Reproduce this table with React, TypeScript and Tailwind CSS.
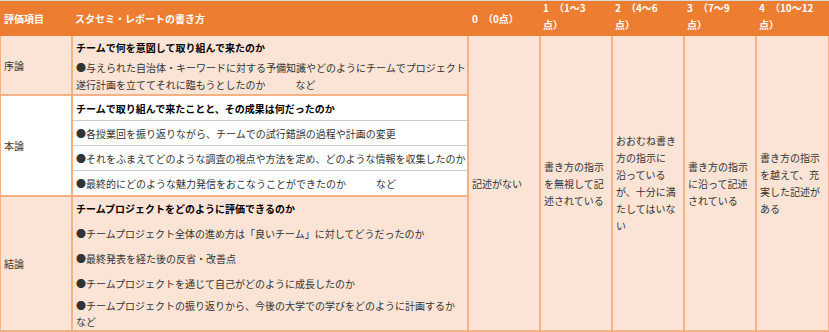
import React from 'react';

const font = "font-['Noto_Sans_CJK_JP','Liberation_Sans',sans-serif]";

const cols = 'grid-cols-[70px_394px_70px_70px_70px_70px_71px]';

const levels: string[][] = [
  ['記述がない'],
  ['書き方の指示', 'を無視して記', '述されている'],
  ['おおむね書き', '方の指示に', '沿っている', 'が、十分に満', 'たしてはいな', 'い'],
  ['書き方の指示', 'に沿って記述', 'されている'],
  ['書き方の指示', 'を越えて、充', '実した記述が', 'ある'],
];

const honron = [
  { text: 'チームで取り組んで来たことと、その成果は何だったのか', bold: true },
  { text: '●各授業回を振り返りながら、チームでの試行錯誤の過程や計画の変更' },
  { text: '●それをふまえてどのような調査の視点や方法を定め、どのような情報を収集したのか' },
  { text: '●最終的にどのような魅力発信をおこなうことができたのか\u3000\u3000\u3000など' },
];

const App: React.FC = () => {
  return (
    <div className={`w-[829px] h-[332px] bg-white border-t border-[#d9d9d9] text-[10px] text-[#333] ${font}`}>
      {/* header */}
      <div className={`grid ${cols} gap-x-[2px] px-px h-[35px] bg-[#ED7D31] text-white font-bold leading-[17px]`}>
        <div className="px-[3px] flex items-center">評価項目</div>
        <div className="px-[2px] flex items-center">スタセミ・レポートの書き方</div>
        <div className="px-[3px] flex items-center">0　（0点）</div>
        <div className="px-[2px] -mt-[2px]">1　（1～3<br />点）</div>
        <div className="px-[2px] -mt-[2px]">2　（4～6<br />点）</div>
        <div className="px-[2px] -mt-[2px]">3　（7～9<br />点）</div>
        <div className="px-[2px] -mt-[2px]">4　（10～12<br />点）</div>
      </div>

      {/* body */}
      <div className={`grid ${cols} grid-rows-[58px_99px_133px] gap-[2px] px-px pb-[2px] bg-[#F4B183] leading-[17px]`}>
        {/* 序論 */}
        <div className="bg-[#FBE4D5] px-[3px] flex items-center">序論</div>
        <div className="bg-[#FBE4D5] px-[3px] pt-[3px] whitespace-nowrap">
          <div className="font-bold text-black">チームで何を意図して取り組んで来たのか</div>
          <div className="mt-[3px]">
            ●与えられた自治体・キーワードに対する予備知識やどのようにチームでプロジェクト
            <br />
            遂行計画を立ててそれに臨もうとしたのか{'\u3000\u3000\u3000'}など
          </div>
        </div>

        {/* level columns span all rows */}
        {levels.map((lines, i) => (
          <div key={i} className="row-span-3 bg-[#FBE4D5] px-[3px] flex flex-col justify-center whitespace-nowrap">
            {lines.map((l, j) => (
              <div key={j}>{l}</div>
            ))}
          </div>
        ))}

        {/* 本論 */}
        <div className="bg-white px-[3px] flex items-center">本論</div>
        <div className="bg-white flex flex-col divide-y divide-[#cccccc] whitespace-nowrap">
          {honron.map((r, i) => (
            <div key={i} className={`h-[24px] box-content px-[3px] flex items-center ${r.bold ? 'font-bold text-black' : ''} ${i === 0 ? 'h-[24px]' : ''}`}>
              {r.text}
            </div>
          ))}
        </div>

        {/* 結論 */}
        <div className="bg-[#FBE4D5] px-[3px] flex items-center">結論</div>
        <div className="bg-[#FBE4D5] px-[3px] pt-[3px] whitespace-nowrap">
          <div className="font-bold text-black">チームプロジェクトをどのように評価できるのか</div>
          <div className="mt-[8px]">●チームプロジェクト全体の進め方は「良いチーム」に対してどうだったのか</div>
          <div className="mt-[8px]">●最終発表を経た後の反省・改善点</div>
          <div className="mt-[8px]">●チームプロジェクトを通じて自己がどのように成長したのか</div>
          <div className="mt-[6px] leading-[16px]">
            ●チームプロジェクトの振り返りから、今後の大学での学びをどのように計画するか
            <br />
            など
          </div>
        </div>
      </div>
    </div>
  );
};

export default App;
